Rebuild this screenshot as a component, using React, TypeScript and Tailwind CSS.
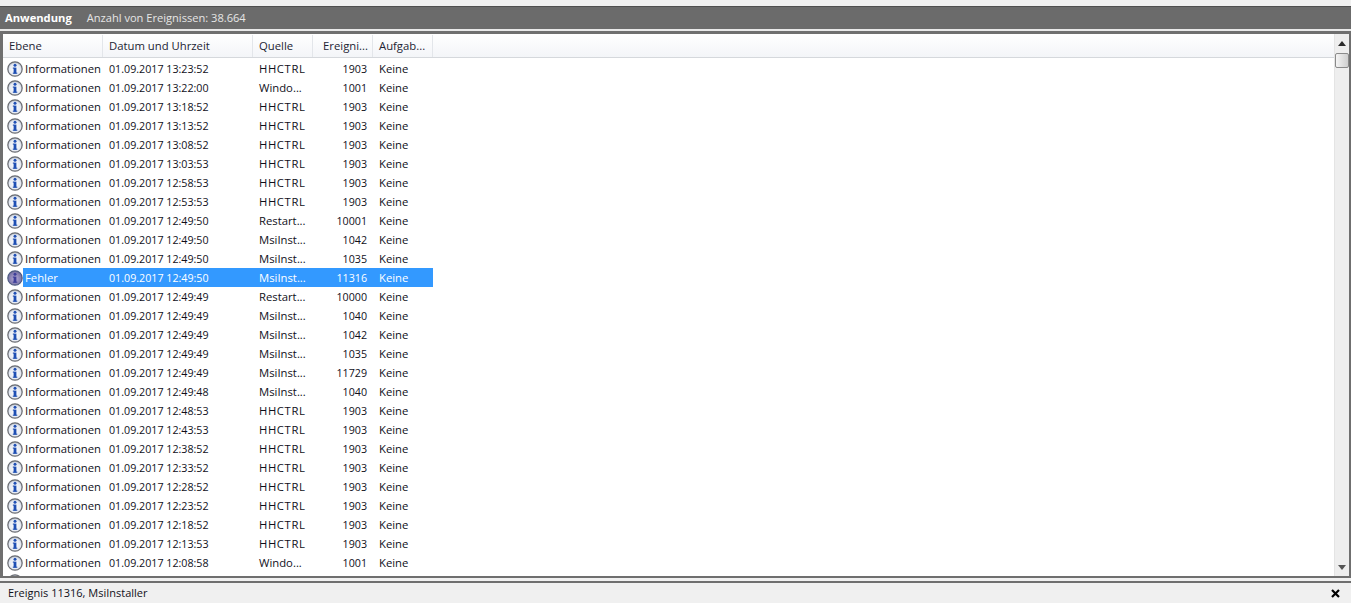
import React from "react";

interface EventRow {
  level: string;
  date: string;
  source: string;
  id: string;
}

const rows: EventRow[] = [
  { level: "Informationen", date: "01.09.2017 13:23:52", source: "HHCTRL", id: "1903" },
  { level: "Informationen", date: "01.09.2017 13:22:00", source: "Windo...", id: "1001" },
  { level: "Informationen", date: "01.09.2017 13:18:52", source: "HHCTRL", id: "1903" },
  { level: "Informationen", date: "01.09.2017 13:13:52", source: "HHCTRL", id: "1903" },
  { level: "Informationen", date: "01.09.2017 13:08:52", source: "HHCTRL", id: "1903" },
  { level: "Informationen", date: "01.09.2017 13:03:53", source: "HHCTRL", id: "1903" },
  { level: "Informationen", date: "01.09.2017 12:58:53", source: "HHCTRL", id: "1903" },
  { level: "Informationen", date: "01.09.2017 12:53:53", source: "HHCTRL", id: "1903" },
  { level: "Informationen", date: "01.09.2017 12:49:50", source: "Restart...", id: "10001" },
  { level: "Informationen", date: "01.09.2017 12:49:50", source: "MsiInst...", id: "1042" },
  { level: "Informationen", date: "01.09.2017 12:49:50", source: "MsiInst...", id: "1035" },
  { level: "Fehler", date: "01.09.2017 12:49:50", source: "MsiInst...", id: "11316" },
  { level: "Informationen", date: "01.09.2017 12:49:49", source: "Restart...", id: "10000" },
  { level: "Informationen", date: "01.09.2017 12:49:49", source: "MsiInst...", id: "1040" },
  { level: "Informationen", date: "01.09.2017 12:49:49", source: "MsiInst...", id: "1042" },
  { level: "Informationen", date: "01.09.2017 12:49:49", source: "MsiInst...", id: "1035" },
  { level: "Informationen", date: "01.09.2017 12:49:49", source: "MsiInst...", id: "11729" },
  { level: "Informationen", date: "01.09.2017 12:49:48", source: "MsiInst...", id: "1040" },
  { level: "Informationen", date: "01.09.2017 12:48:53", source: "HHCTRL", id: "1903" },
  { level: "Informationen", date: "01.09.2017 12:43:53", source: "HHCTRL", id: "1903" },
  { level: "Informationen", date: "01.09.2017 12:38:52", source: "HHCTRL", id: "1903" },
  { level: "Informationen", date: "01.09.2017 12:33:52", source: "HHCTRL", id: "1903" },
  { level: "Informationen", date: "01.09.2017 12:28:52", source: "HHCTRL", id: "1903" },
  { level: "Informationen", date: "01.09.2017 12:23:52", source: "HHCTRL", id: "1903" },
  { level: "Informationen", date: "01.09.2017 12:18:52", source: "HHCTRL", id: "1903" },
  { level: "Informationen", date: "01.09.2017 12:13:53", source: "HHCTRL", id: "1903" },
  { level: "Informationen", date: "01.09.2017 12:08:58", source: "Windo...", id: "1001" },
];

const InfoIcon = ({ dim }: { dim?: boolean }) => {
  const ink = dim ? "#3f3f9a" : "#1f4fb4";
  return (
    <svg width="16" height="16" viewBox="0 0 16 16" className="shrink-0">
      <defs>
        <radialGradient id="infoFill" cx="50%" cy="55%" r="55%">
          <stop offset="0%" stopColor="#ffffff" />
          <stop offset="70%" stopColor="#e6eaf2" />
          <stop offset="100%" stopColor="#aab4c6" />
        </radialGradient>
        <radialGradient id="errFill" cx="50%" cy="55%" r="55%">
          <stop offset="0%" stopColor="#b9aeda" />
          <stop offset="100%" stopColor="#6f6a9e" />
        </radialGradient>
      </defs>
      <circle cx="8" cy="8" r="7.2" fill={dim ? "url(#errFill)" : "url(#infoFill)"} stroke={dim ? "#4d5a80" : "#6b6d72"} strokeWidth="1.2" />
      <rect x="6.6" y="6.6" width="2.8" height="6" fill={ink} />
      <rect x="5.8" y="6.6" width="1.4" height="1" fill={ink} />
      <rect x="5.8" y="11.7" width="4.5" height="1" fill={ink} />
      <circle cx="8" cy="4.3" r="1.5" fill={ink} />
    </svg>
  );
};

const Th = ({ label, width, right }: { label: string; width: string; right?: boolean }) => (
  <div className={`${width} h-full flex items-center border-r border-[#e3e6ea] ${right ? "justify-end pr-[4px]" : "pl-[6px]"}`}>
    {label}
  </div>
);

const App: React.FC = () => {
  return (
    <div className="w-[1351px] h-[603px] overflow-hidden flex flex-col bg-[#f0f0f0] text-[11.3px] text-[#10101a] font-['Open_Sans','Noto_Sans',sans-serif]">
      <div className="h-[6px] shrink-0 bg-[#f0f0f0]" />
      <div className="h-[23px] shrink-0 flex items-center bg-[#6b6b6b] border-t border-[#4f4f4f] text-[11px] pl-[5px]">
        <span className="font-bold text-white text-[11.2px]">Anwendung</span>
        <span className="ml-[15px] text-[#e6e6e6] text-[11.1px]">Anzahl von Ereignissen: 38.664</span>
      </div>
      <div className="h-[2px] shrink-0 bg-[#e8e8e8]" />
      <div className="h-[547px] shrink-0 flex border-[3px] border-b-2 border-r-2 border-[#6f6f6f] bg-white">
        <div className="flex-1 min-w-0 overflow-hidden flex flex-col">
          <div className="h-[24px] shrink-0 pt-[1px] flex items-center border-b border-[#d5d8dc] bg-gradient-to-b from-white to-[#f3f5f8] text-[#1c2433]">
            <Th label="Ebene" width="w-[100px]" />
            <Th label="Datum und Uhrzeit" width="w-[150px]" />
            <Th label="Quelle" width="w-[60px]" />
            <Th label="Ereigni..." width="w-[60px]" right />
            <Th label="Aufgab..." width="w-[60px]" />
          </div>
          <div className="pt-[1px]">
            {rows.map((row, i) => {
              const selected = row.level === "Fehler";
              return (
                <div key={i} className="h-[19px] flex items-center w-[430px] whitespace-nowrap">
                  <div className="w-[20px] shrink-0 flex justify-center pl-[4px]">
                    <InfoIcon dim={selected} />
                  </div>
                  <div className={`flex-1 h-full pt-[1px] flex items-center ${selected ? "bg-[#3399ff] text-white" : ""}`}>
                    <div className="w-[85px] pl-[2px]">{row.level}</div>
                    <div className="w-[150px] pl-[1px] text-[10.7px]">{row.date}</div>
                    <div className={`w-[60px] pl-[1px] ${row.source === "HHCTRL" ? "tracking-[0.6px]" : ""}`}>{row.source}</div>
                    <div className="w-[60px] pr-[11px] text-right text-[10.7px]">{row.id}</div>
                    <div className="w-[55px] pl-[1px]">Keine</div>
                  </div>
                </div>
              );
            })}
            {/* next row is cut by the frame, only the top of its icon shows */}
            <div className="h-[19px] flex items-center">
              <div className="w-[20px] shrink-0 flex justify-center pl-[4px]">
                <InfoIcon />
              </div>
            </div>
          </div>
        </div>
        <div className="w-[15px] shrink-0 flex flex-col items-stretch bg-[#eeeeee] border-l border-[#e4e4e4]">
          <div className="h-[19px] flex items-center justify-center">
            <svg width="8" height="5" viewBox="0 0 8 5"><path d="M4 0 L8 5 L0 5 Z" fill="#2a2a2a" /></svg>
          </div>
          <div className="h-[15px] rounded-[2px] border border-[#8a8a8a] bg-gradient-to-r from-[#f4f4f4] to-[#cfcfcf]" />
          <div className="flex-1" />
          <div className="h-[18px] flex items-center justify-center">
            <svg width="8" height="5" viewBox="0 0 8 5"><path d="M0 0 L8 0 L4 5 Z" fill="#555555" /></svg>
          </div>
        </div>
      </div>
      <div className="h-[3px] shrink-0 bg-[#f0f0f0]" />
      <div className="flex-1 flex items-center justify-between border-t-2 border-[#6f6f6f] bg-[#f0f0f0] pl-[8px] pr-[11px] text-[11px]">
        <span>Ereignis 11316, MsiInstaller</span>
        <svg width="9" height="9" viewBox="0 0 9 9"><path d="M1 1 L8 8 M8 1 L1 8" stroke="#000000" strokeWidth="2.2" /></svg>
      </div>
    </div>
  );
};

export default App;
